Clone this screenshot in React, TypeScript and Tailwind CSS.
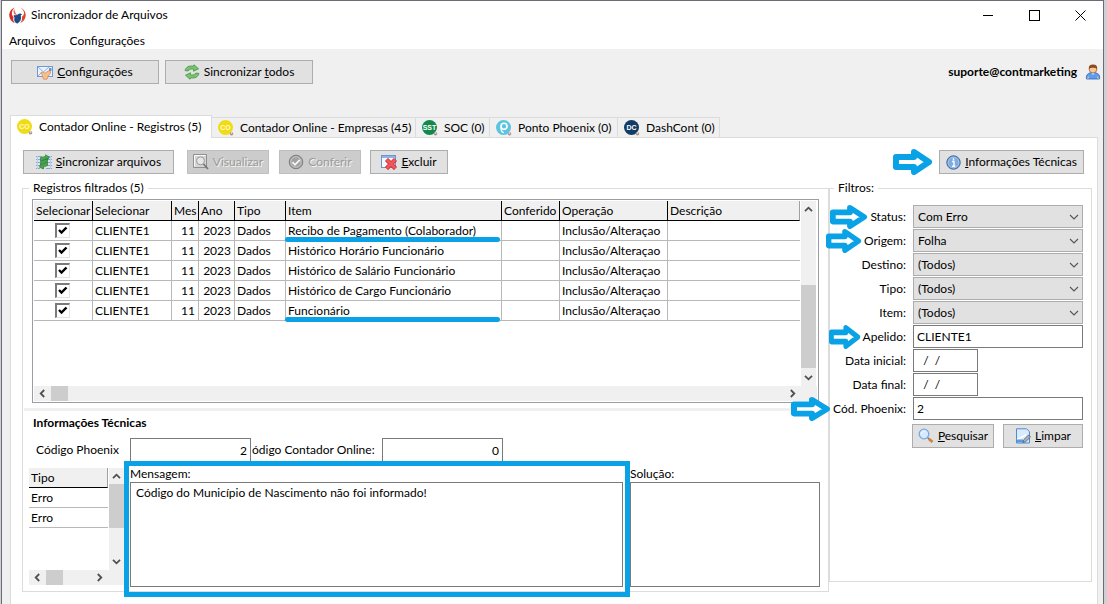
import type { ReactNode } from "react"
import clsx from "clsx"

const tabs = [
  { label: "Contador Online - Registros (5)", icon: <BadgeIcon bg="#f0dc14" text="CO" fg="#fffbd0" />, width: "w-[202px]", active: true },
  { label: "Contador Online - Empresas (45)", icon: <BadgeIcon bg="#f0dc14" text="CO" fg="#fffbd0" />, width: "w-[204px]" },
  { label: "SOC (0)", icon: <BadgeIcon bg="#12884a" text="SST" fg="#ffffff" />, width: "w-[74px]" },
  { label: "Ponto Phoenix (0)", icon: <PontoIcon />, width: "w-[128px]" },
  { label: "DashCont (0)", icon: <BadgeIcon bg="#123c66" text="DC" fg="#ffffff" />, width: "w-[102px]" },
]

const columns = [
  { title: "Selecionar", width: "w-[59px]" },
  { title: "Selecionar", width: "w-[79px]" },
  { title: "Mes", width: "w-[27px]" },
  { title: "Ano", width: "w-9" },
  { title: "Tipo", width: "w-[51px]" },
  { title: "Item", width: "w-[216px]" },
  { title: "Conferido", width: "w-[58px]" },
  { title: "Operação", width: "w-[108px]" },
  { title: "Descrição", width: "" },
]

const records = [
  { item: "Recibo de Pagamento (Colaborador)", marked: true },
  { item: "Histórico Horário Funcionário" },
  { item: "Histórico de Salário Funcionário" },
  { item: "Histórico de Cargo Funcionário" },
  { item: "Funcionário", marked: true },
]

const selects = [
  { id: "status", label: "Status:", value: "Com Erro", arrow: "w-[38px]" },
  { id: "origem", label: "Origem:", value: "Folha", arrow: "w-9" },
  { id: "destino", label: "Destino:", value: "(Todos)" },
  { id: "tipo", label: "Tipo:", value: "(Todos)" },
  { id: "item", label: "Item:", value: "(Todos)" },
]

const inputs = [
  { id: "apelido", label: "Apelido:", value: "CLIENTE1", arrow: "w-8", width: "w-[170px]" },
  { id: "inicial", label: "Data inicial:", value: "  /  /", width: "w-[65px]" },
  { id: "final", label: "Data final:", value: "  /  /", width: "w-[65px]" },
  { id: "codigo", label: "Cód. Phoenix:", value: "2", arrow: "w-10", width: "w-[170px]" },
]

/* ---------- icons ---------- */

function LogoIcon() {
  return (
    <svg className="w-[17px] h-[17px]" viewBox="0 0 16 16" aria-hidden="true">
      <path d="M5.500.4C2 1.800-.2 5 .3 8.600c.4 3 2.400 5.400 5.200 6.600C4 13.200 3.600 11.400 4.300 9.600 3 8.400 2.400 6.800 2.800 4.800 3.200 3 4.200 1.400 5.500.4z" fill="#d3302a" />
      <path d="M5 1.800C3.800 3.800 4 5.800 5.600 7c.6.4 1.400.4 2 .2C6 5.600 5.200 3.800 5 1.800z" fill="#ee6a4c" />
      <path d="M10.400.4c3.200 1 5.400 4 5.300 7.400-.1 3.400-2.200 6.200-5.200 7.200 1.600-1.800 2.200-3.800 1.500-5.800 1.600-.8 2.300-2.200 2.100-4.200C13.900 3.200 12.500 1.500 10.400.4z" fill="#e2452c" />
      <path d="M4.600 7.200c1.300 1 2.700.8 3.900-.4 1.300-1.300 3.200-1 4 .9-1.200-.3-1.600.1-1.300 1.300.6 2.600-.6 5-3.200 6.600-2.600-1-3.800-3.200-2.700-5.600-.7-.6-1-1.600-.7-2.800z" fill="#1f4a86" />
    </svg>
  )
}

function ConfigIcon() {
  return (
    <svg className="w-4 h-4" viewBox="0 0 16 16" aria-hidden="true">
      <rect x=".5" y="2.500" width="15" height="10" fill="#e9f3ff" stroke="#6f9ad6" />
      <path d="M1 3l5.500 5L12 3" fill="none" stroke="#8fb2e2" />
      <path d="M1 12l4-4" stroke="#8fb2e2" />
      <rect x="12" y="4" width="2.500" height="3" fill="#6e90bd" />
      <path d="M4 8.500l2-.5 2 1.200 3.500-2.400 1.800.4.2 2-2.500 3-1 3H6.500L5.500 12z" fill="#f5c08e" stroke="#dd8b56" strokeWidth=".8" />
    </svg>
  )
}

function SyncIcon() {
  return (
    <svg className="w-4 h-4" viewBox="0 0 16 16" aria-hidden="true">
      <path d="M1 6.500C2 3 5 1.500 9 2.200L10 .8l4.500 4-5 2.400.3-2C7.500 4.600 5.500 5 4 7z" fill="#7cc46c" stroke="#3f9142" strokeWidth=".8" />
      <path d="M15 9.500c-1 3.500-4 5-8 4.300L6 15.200l-4.500-4 5-2.400-.3 2c2.300.6 4.300.2 5.800-1.800z" fill="#7cc46c" stroke="#3f9142" strokeWidth=".8" />
    </svg>
  )
}

function SyncFilesIcon() {
  return (
    <svg className="w-4 h-4" viewBox="0 0 16 16" aria-hidden="true">
      <path d="M0 2.500h6M0 5.500h5M0 8.500h4M0 11.500h5M0 14.500h4M10 2.500h6M11 5.500h5M11 8.500h5M10 11.500h6M10 14.500h6" stroke="#7fa9d8" />
      <path d="M1.500 2v13M14.500 2v13" stroke="#b7d0ec" />
      <path d="M4.500 3.500l5-1V.8l4 2.500-2.300 3V4.800L4.500 7zM4.500 7.500l7-3v3l-7 3zM4.500 11l7-3v3.500l-4 1.500v2L3.500 13.200l1-2.800z" fill="#4aa650" stroke="#2a7d36" strokeWidth=".7" />
    </svg>
  )
}

function PreviewIcon() {
  return (
    <svg className="w-4 h-4" viewBox="0 0 16 16" fill="none" aria-hidden="true">
      <path d="M.5 13.500V.5h13v13z" fill="#d6d6d6" stroke="#8f8f8f" />
      <path d="M1.500 12.500v-11h11" stroke="#fafafa" />
      <circle cx="7.500" cy="6.800" r="4" fill="#e6e6e6" stroke="#999" />
      <path d="M10.500 10l4.500 5" stroke="#777" strokeWidth="1.800" />
    </svg>
  )
}

function CheckIcon() {
  return (
    <svg className="w-4 h-4" viewBox="0 0 16 16" fill="none" aria-hidden="true">
      <circle cx="8" cy="8" r="6.800" fill="#a2a2a2" stroke="#7e7e7e" />
      <circle cx="8" cy="8" r="5.200" stroke="#c6c6c6" />
      <path d="M4.500 8.200l2.500 2.600 4.800-5" stroke="#f5f5f5" strokeWidth="1.800" />
    </svg>
  )
}

function DeleteIcon() {
  return (
    <svg className="w-4 h-4" viewBox="0 0 16 16" fill="none" aria-hidden="true">
      <rect x=".5" y="1.500" width="14" height="12" fill="#f5f9ff" stroke="#6e94ce" />
      <path d="M1 3h13" stroke="#8fb3e6" strokeWidth="2" />
      <path d="M5.500 5.500l9 9M14.500 5.500l-9 9" stroke="#c9252b" strokeWidth="4.400" />
      <path d="M5.800 5.800l8.400 8.400M14.200 5.800l-8.400 8.400" stroke="#f0575a" strokeWidth="3" />
    </svg>
  )
}

function InfoIcon() {
  return (
    <svg className="w-[15px] h-[15px]" viewBox="0 0 16 16" aria-hidden="true">
      <circle cx="8" cy="8" r="7.200" fill="#5b8fd0" stroke="#46699c" />
      <circle cx="8" cy="8" r="5.800" fill="#7fabe0" stroke="#bdd5f2" strokeWidth=".8" />
      <path d="M8 3.500v2M6.500 7H8.500v5M6.500 12h3.500" stroke="#fff" strokeWidth="1.500" fill="none" />
    </svg>
  )
}

function SearchIcon() {
  return (
    <svg className="w-4 h-4" viewBox="0 0 16 16" fill="none" aria-hidden="true">
      <path d="M9.500 9.500l2 2" stroke="#777" strokeWidth="1.500" />
      <path d="M11 11l3.500 3" stroke="#d2803c" strokeWidth="2.800" />
      <circle cx="6" cy="6" r="4.800" fill="#d5e9ff" stroke="#79a8e0" strokeWidth="1.300" />
      <path d="M3.500 5.500C4 4 5 3.400 6.500 3.400" stroke="#fff" />
    </svg>
  )
}

function ClearIcon() {
  return (
    <svg className="w-4 h-4" viewBox="0 0 16 16" fill="none" aria-hidden="true">
      <path d="M1.500.8h10l3 3V15H1.500z" fill="#d9eafc" stroke="#4f8ad2" />
      <path d="M2 11.500c3-2 6-2 9-5" stroke="#fff" strokeWidth="1.500" />
      <path d="M2 13h6" stroke="#5b9ade" strokeWidth="3" />
      <path d="M8 14.500l.8-2.800L13.500 7l2 2-4.800 4.700z" fill="#a9b4c0" stroke="#4d5a68" strokeWidth=".8" />
    </svg>
  )
}

function UserIcon() {
  return (
    <svg className="w-4 h-4" viewBox="0 0 16 16" aria-hidden="true">
      <path d="M1.500 15c-.8-4 1.500-6.500 6.500-6.500S15.300 11 14.500 15z" fill="#5b9df0" stroke="#2c62b8" strokeWidth=".8" />
      <path d="M1.800 14.500l2-2.500v2.500zM14.200 14.500l-2-2.500v2.500z" fill="#f3bf92" />
      <path d="M6 8.500L8 11l2-2.500z" fill="#f8e1cb" />
      <circle cx="8" cy="5.200" r="3.800" fill="#f6c69c" stroke="#a5622c" strokeWidth=".8" />
      <path d="M3.800 5.200C3.500 2 5 .6 8 .6s4.500 1.400 4.200 4.600C11 3.800 9 3.800 8 3.800s-3 0-4.200 1.400z" fill="#8c4d1d" />
    </svg>
  )
}

function BadgeIcon({ bg, text, fg }: { bg: string; text: string; fg: string }) {
  return (
    <svg className="w-4 h-4 shrink-0" viewBox="0 0 16 16" aria-hidden="true">
      <circle cx="7.500" cy="7.500" r="7.500" fill={bg} />
      <text x="7.500" y="10" textAnchor="middle" fontSize="7" fontWeight="700" fontFamily="Liberation Sans" fill={fg}>{text}</text>
      <circle cx="13.500" cy="13.800" r="1.800" fill="#a5938f" />
      <circle cx="13.500" cy="13" r=".9" fill="#e2d6d2" />
    </svg>
  )
}

function PontoIcon() {
  return (
    <svg className="w-4 h-4 shrink-0" viewBox="0 0 16 16" fill="none" aria-hidden="true">
      <circle cx="7.500" cy="7.500" r="7.500" fill="#5cc4de" />
      <circle cx="8" cy="6.200" r="3" stroke="#fff" strokeWidth="1.600" />
      <path d="M5.200 6.500v3.500c0 1.500 1.300 2 2.500 2.800" stroke="#fff" strokeWidth="1.300" />
      <circle cx="13.500" cy="13.800" r="1.800" fill="#a5938f" />
      <circle cx="13.500" cy="13" r=".9" fill="#e2d6d2" />
    </svg>
  )
}

function Chevron({ className }: { className?: string }) {
  return (
    <svg className={clsx("w-[9px] h-[9px]", className)} viewBox="0 0 9 9" fill="none" aria-hidden="true">
      <path d="M1 2.800l3.500 3.500L8 2.800" stroke="#505050" strokeWidth="1.800" />
    </svg>
  )
}

/* Blue marker arrow, sits right before the thing it points at */
function Pointer({ className }: { className: string }) {
  return (
    <svg className={clsx("absolute right-full", className)} viewBox="0 0 40 26" preserveAspectRatio="none" fill="none" aria-hidden="true">
      <path d="M3 8h18V3l15 10L21 23v-5H3z" stroke="#0aa2e6" strokeWidth="6" strokeLinejoin="round" fill="#fff" />
    </svg>
  )
}

/* ---------- controls ---------- */

function ToolButton({ icon, width, disabled, children }: { icon: ReactNode; width: string; disabled?: boolean; children: ReactNode }) {
  return (
    <button
      type="button"
      disabled={disabled}
      className={clsx(
        "h-6 flex items-center justify-center gap-1 border whitespace-nowrap",
        width,
        disabled ? "bg-[#cccccc] border-[#bfbfbf] text-[#9b9b9b] [text-shadow:1px_1px_0_#f4f4f4]" : "bg-[#e1e1e1] border-[#adadad]",
      )}
    >
      {icon}
      <span>{children}</span>
    </button>
  )
}

function VScroll({ thumb, atEnd }: { thumb: string; atEnd?: boolean }) {
  return (
    <div className="w-[15px] flex flex-col items-center bg-[#f0f0f0]">
      <div className="h-4 flex items-center"><Chevron className="rotate-180" /></div>
      <div className={clsx("flex-1 w-full flex flex-col", atEnd && "justify-end")}>
        <div className={clsx("w-full bg-[#cdcdcd]", thumb)} />
      </div>
      <div className="h-[18px] flex items-center"><Chevron /></div>
    </div>
  )
}

function HScroll() {
  return (
    <div className="h-[15px] flex items-center bg-[#f0f0f0] pr-4">
      <div className="w-[17px] flex justify-center"><Chevron className="rotate-90" /></div>
      <div className="flex-1 h-full"><div className="w-[17px] h-full bg-[#cdcdcd]" /></div>
      <div className="w-[17px] flex justify-center"><Chevron className="-rotate-90" /></div>
    </div>
  )
}

function GridCheckbox({ label }: { label: string }) {
  return (
    <span className="relative block w-[15px] h-[15px] mx-auto">
      <input
        type="checkbox"
        defaultChecked
        aria-label={label}
        className="peer appearance-none block w-[15px] h-[15px] bg-white border border-t-2 border-l-2 border-t-[#7a7a7a] border-l-[#7a7a7a] border-r-[#e3e3e3] border-b-[#e3e3e3]"
      />
      <svg className="absolute inset-0 w-[15px] h-[15px] pointer-events-none hidden peer-checked:block" viewBox="0 0 15 15" fill="none" aria-hidden="true">
        <path d="M4 7l2.500 2.500L11.500 4.500" stroke="#000" strokeWidth="2.400" />
      </svg>
    </span>
  )
}

const cell = "h-5 p-0 pl-[2px] border-b border-r border-[#b8b8b8] leading-4 whitespace-nowrap"
const headCell = "h-5 p-0 pl-[2px] bg-[#f0f0f0] border-b border-r border-black text-left font-normal leading-4 whitespace-nowrap"

function RecordsGrid() {
  return (
    <div className="ml-[9px] mr-[9px] h-[204px] p-px border border-[#9a9da3] flex flex-col">
      <div className="flex-1 flex">
        <div className="flex-1 min-w-0 pr-px">
          <table className="w-full table-fixed border-separate border-spacing-0">
            <thead>
              <tr>
                {columns.map((col, i) => (
                  <th key={i} className={clsx(headCell, col.width, i === columns.length - 1 && "border-r-[#a0a0a0]")}>{col.title}</th>
                ))}
              </tr>
            </thead>
            <tbody>
              {records.map((rec) => (
                <tr key={rec.item}>
                  <td className={clsx(cell, "pr-1")}><GridCheckbox label={rec.item} /></td>
                  <td className={cell}>CLIENTE1</td>
                  <td className={clsx(cell, "text-right pr-[3px]")}>11</td>
                  <td className={clsx(cell, "text-right pr-[3px]")}>2023</td>
                  <td className={cell}>Dados</td>
                  <td className={clsx(cell, "relative")}>
                    {rec.item}
                    {rec.marked && <span className="absolute -left-px right-px -bottom-[2px] h-[5px] rounded-full bg-[#0aa2e6]" />}
                  </td>
                  <td className={cell} />
                  <td className={cell}>Inclusão/Alteraçao</td>
                  <td className={clsx(cell, "border-r-0")} />
                </tr>
              ))}
            </tbody>
          </table>
        </div>
        <VScroll thumb="h-[83px]" atEnd />
        <div className="w-px" />
      </div>
      <HScroll />
    </div>
  )
}

function ErrorList() {
  return (
    <div className="w-[95px] h-[117px] mt-[2px] flex flex-col">
      <div className="flex-1 flex">
        <div className="flex-1 pr-px">
          <table className="w-full border-separate border-spacing-0">
            <thead>
              <tr><th className={clsx(headCell, "border-r-[#a0a0a0]")}>Tipo</th></tr>
            </thead>
            <tbody>
              <tr><td className={clsx(cell, "border-r-0")}>Erro</td></tr>
              <tr><td className={clsx(cell, "border-r-0")}>Erro</td></tr>
            </tbody>
          </table>
        </div>
        <VScroll thumb="h-11" />
      </div>
      <HScroll />
    </div>
  )
}

function TechnicalInfo() {
  return (
    <section>
      <h2 className="mt-1 ml-[10px] font-bold leading-4">Informações Técnicas</h2>
      <div className="mt-[7px] ml-[13px] flex items-center">
        <label htmlFor="phoenix" className="w-[94px]">Código Phoenix</label>
        <input id="phoenix" defaultValue="2" className="w-[121px] h-6 pr-[3px] border border-[#7a7a7a] bg-white text-right" />
        <label htmlFor="contador" className="w-[131px] pl-px whitespace-nowrap">ódigo Contador Online:</label>
        <input id="contador" defaultValue="0" className="w-[121px] h-6 pr-[3px] border border-[#7a7a7a] bg-white text-right" />
      </div>
      <div className="mt-1 ml-[6px] mr-2 mb-1 flex">
        <ErrorList />
        <div className="relative flex-1 ml-[6px] flex flex-col">
          <label htmlFor="mensagem" className="leading-4">Mensagem:</label>
          <textarea
            id="mensagem"
            defaultValue="Código do Município de Nascimento não foi informado!"
            className="h-[105px] w-full resize-none border border-[#7a7a7a] px-[5px] py-[2px] leading-4"
          />
          <div className="absolute -left-[6px] -right-[7px] -top-[5px] -bottom-[10px] border-[5px] border-[#0aa2e6] pointer-events-none" />
        </div>
        <div className="w-[190px] ml-[7px] flex flex-col">
          <label htmlFor="solucao" className="leading-4">Solução:</label>
          <textarea id="solucao" className="h-[105px] w-full resize-none border border-[#7a7a7a] px-[5px] py-[2px] leading-4" />
        </div>
      </div>
    </section>
  )
}

function Filters() {
  return (
    <fieldset className="w-[263px] mb-[10px] pr-2 pt-[9px] border border-[#dcdcdc] min-w-0">
      <legend className="ml-1 px-1 leading-4">Filtros:</legend>
      <div className="flex flex-col gap-px">
        {selects.map((f) => (
          <div key={f.id} className="flex items-center justify-end gap-[7px]">
            <label htmlFor={f.id} className="relative">
              {f.arrow && <Pointer className={clsx("h-6 mr-[2px] -top-1", f.arrow)} />}
              {f.label}
            </label>
            <div className="relative w-[170px]">
              <select id={f.id} className="appearance-none block w-full h-[23px] pl-1 bg-[#e1e1e1] border border-[#adadad]">
                <option>{f.value}</option>
              </select>
              <svg className="absolute right-1 top-[7px] w-[10px] h-[10px] pointer-events-none" viewBox="0 0 10 10" fill="none" aria-hidden="true">
                <path d="M1 3l4 4 4-4" stroke="#555" strokeWidth="1.100" />
              </svg>
            </div>
          </div>
        ))}
        {inputs.map((f) => (
          <div key={f.id} className="flex items-center justify-end gap-[7px]">
            <label htmlFor={f.id} className="relative whitespace-nowrap">
              {f.arrow && <Pointer className={clsx("h-6 mr-[2px] -top-1", f.arrow)} />}
              {f.label}
            </label>
            <div className="w-[170px]">
              <input id={f.id} defaultValue={f.value} className={clsx("block h-[23px] px-[3px] border border-[#7a7a7a] bg-white", f.width)} />
            </div>
          </div>
        ))}
      </div>
      <div className="mt-1 flex justify-end gap-[9px]">
        <ToolButton icon={<SearchIcon />} width="w-[82px]"><u>P</u>esquisar</ToolButton>
        <ToolButton icon={<ClearIcon />} width="w-20"><u>L</u>impar</ToolButton>
      </div>
    </fieldset>
  )
}

export default function App() {
  return (
    <div className="min-h-screen pl-px pr-[3px] bg-[#cfd0d6] flex">
      <div className="flex-1 flex flex-col bg-[#f0f0f0] border border-b-0 border-[#6c6c74] text-[12px] leading-4 text-black font-['Lato','Open_Sans',sans-serif]">
        <header className="bg-white">
          <div className="h-7 pl-[7px] flex items-center">
            <LogoIcon />
            <h1 className="ml-[5px]">Sincronizador de Arquivos</h1>
            <div className="ml-auto flex">
              <button type="button" aria-label="Minimizar" className="w-[46px] h-7 flex items-center justify-center">
                <svg className="w-[11px] h-[11px]" viewBox="0 0 11 11" aria-hidden="true"><path d="M0 5.500h10" stroke="#000" /></svg>
              </button>
              <button type="button" aria-label="Maximizar" className="w-[46px] h-7 flex items-center justify-center">
                <svg className="w-[11px] h-[11px]" viewBox="0 0 11 11" aria-hidden="true"><rect x=".5" y=".5" width="10" height="10" fill="none" stroke="#000" /></svg>
              </button>
              <button type="button" aria-label="Fechar" className="w-[46px] h-7 flex items-center justify-center">
                <svg className="w-[11px] h-[11px]" viewBox="0 0 11 11" aria-hidden="true"><path d="M.5.5l10 10M10.500.5l-10 10" stroke="#000" /></svg>
              </button>
            </div>
          </div>
          <nav className="h-5 pl-[7px] flex items-end gap-[14px]">
            <button type="button">Arquivos</button>
            <button type="button">Configurações</button>
          </nav>
        </header>

        <div className="h-[66px] pt-[11px] pl-[9px] pr-[2px] flex items-start gap-[6px]">
          <ToolButton icon={<ConfigIcon />} width="w-[148px]"><u>C</u>onfigurações</ToolButton>
          <ToolButton icon={<SyncIcon />} width="w-[148px]">Sincronizar <u>t</u>odos</ToolButton>
          <div className="ml-auto h-6 flex items-center gap-2 font-bold">
            suporte@contmarketing
            <UserIcon />
          </div>
        </div>

        <div role="tablist" className="ml-2 flex items-end">
          {tabs.map((tab) => (
            <button
              key={tab.label}
              type="button"
              role="tab"
              aria-selected={!!tab.active}
              className={clsx(
                "flex items-center gap-[6px] pl-[6px] border-t border-r border-[#dcdcdc] whitespace-nowrap",
                tab.width,
                tab.active ? "h-[23px] -mb-px bg-white border-l z-10" : "h-5",
              )}
            >
              {tab.icon}
              {tab.label}
            </button>
          ))}
        </div>

        <main className="flex-1 ml-2 mr-[5px] pl-[11px] pr-[5px] bg-white border-t border-x border-[#dcdcdc]">
          <div className="mt-3 pl-px pr-2 flex">
            <ToolButton icon={<SyncFilesIcon />} width="w-[151px]"><u>S</u>incronizar arquivos</ToolButton>
            <div className="ml-[13px] mr-[9px] flex gap-[10px]">
              <ToolButton icon={<PreviewIcon />} width="w-[82px]" disabled>Visualizar</ToolButton>
              <ToolButton icon={<CheckIcon />} width="w-[82px]" disabled>Conferir</ToolButton>
            </div>
            <ToolButton icon={<DeleteIcon />} width="w-[78px]"><u>E</u>xcluir</ToolButton>
            <div className="relative ml-auto">
              <Pointer className="w-10 h-[26px] mr-[6px] -top-px" />
              <ToolButton icon={<InfoIcon />} width="w-[145px]"><u>I</u>nformações Técnicas</ToolButton>
            </div>
          </div>
          <div className="mt-[6px] flex">
            <fieldset className="flex-1 min-w-0 pt-[3px] border border-[#dcdcdc]">
              <legend className="ml-[6px] px-1 leading-4">Registros filtrados (5)</legend>
              <RecordsGrid />
              <div className="mt-[5px] mx-px h-[3px] bg-[#f0f0f0]" />
              <TechnicalInfo />
            </fieldset>
            <Filters />
          </div>
        </main>
      </div>
    </div>
  )
}
